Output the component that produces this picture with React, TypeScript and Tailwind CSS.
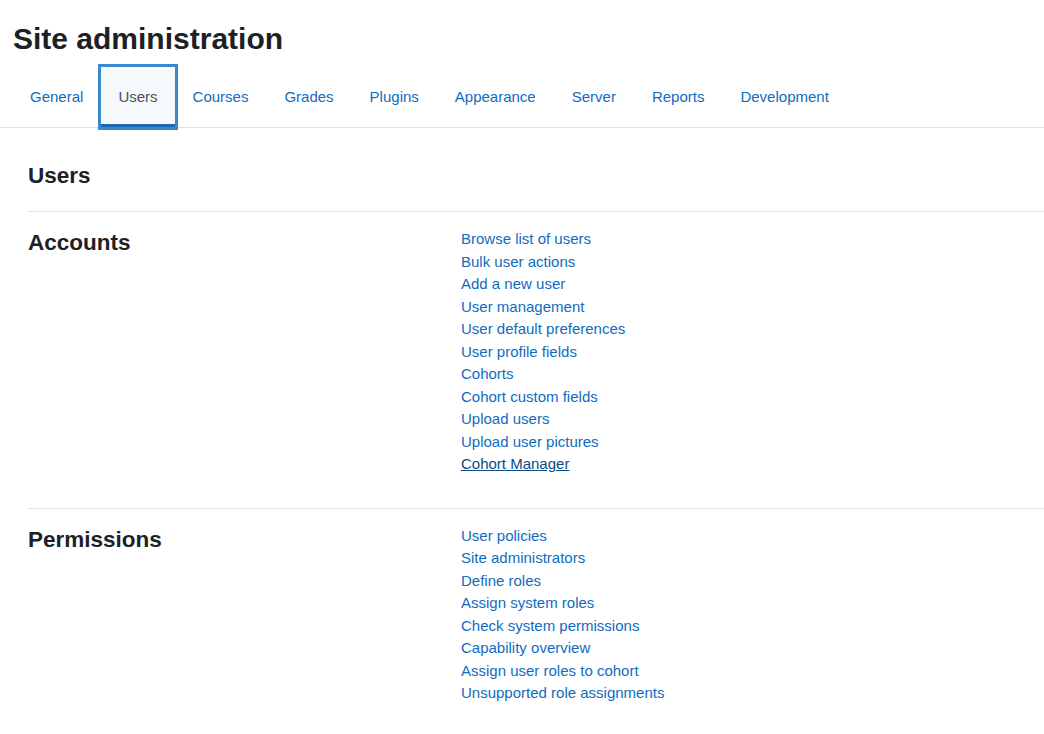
const TABS = ['General', 'Users', 'Courses', 'Grades', 'Plugins', 'Appearance', 'Server', 'Reports', 'Development'];

const SECTIONS: { title: string; links: string[] }[] = [
  {
    title: 'Accounts',
    links: [
      'Browse list of users',
      'Bulk user actions',
      'Add a new user',
      'User management',
      'User default preferences',
      'User profile fields',
      'Cohorts',
      'Cohort custom fields',
      'Upload users',
      'Upload user pictures',
      'Cohort Manager',
    ],
  },
  {
    title: 'Permissions',
    links: [
      'User policies',
      'Site administrators',
      'Define roles',
      'Assign system roles',
      'Check system permissions',
      'Capability overview',
      'Assign user roles to cohort',
      'Unsupported role assignments',
    ],
  },
];

// the link that currently has the hover/focus style in the screenshot
const HOVERED = 'Cohort Manager';

export default function App() {
  return (
    <div className="min-h-screen bg-white text-[#1d2125] font-['Liberation_Sans',Arial,sans-serif]">
      <header className="px-[13px] pt-[21px]">
        <h1 className="text-[30px] leading-[36px] font-bold">Site administration</h1>
      </header>

      <nav className="mt-[10px] border-b border-[#dee2e6] pl-[12px]">
        <ul className="flex">
          {TABS.map(tab => {
            const active = tab === 'Users';
            return (
              <li key={tab}>
                <a
                  href="#"
                  className={
                    active
                      ? 'flex h-[60px] items-center pt-[3px] px-[17px] text-[15px] text-[#4b5157] bg-[#f5f9fc] border-b-[3px] border-[#1769b8] outline-[3px] outline-solid outline-[#3b88cf]'
                      : 'flex h-[60px] items-center px-[18px] text-[15px] text-[#0f6cbf]'
                  }
                >
                  {tab}
                </a>
              </li>
            );
          })}
        </ul>
      </nav>

      <main className="pl-[28px]">
        <h2 className="pt-[34px] pb-[22px] text-[22.5px] leading-[27px] font-bold border-b border-[#dee2e6]">
          Users
        </h2>

        {SECTIONS.map((s, i) => (
          <section
            key={s.title}
            className={`flex pt-[15px] pb-[32px] ${i < SECTIONS.length - 1 ? 'border-b border-[#dee2e6]' : ''}`}
          >
            <h3 className="w-[433px] shrink-0 mt-[2px] text-[22.5px] leading-[27px] font-bold">{s.title}</h3>
            <ul className="flex flex-col mt-[1px]">
              {s.links.map(link => (
                <li key={link} className="text-[15px] leading-[22.5px]">
                  <a
                    href="#"
                    className={link === HOVERED ? 'text-[#0a4c86] underline' : 'text-[#0f6cbf]'}
                  >
                    {link}
                  </a>
                </li>
              ))}
            </ul>
          </section>
        ))}
      </main>
    </div>
  );
}
